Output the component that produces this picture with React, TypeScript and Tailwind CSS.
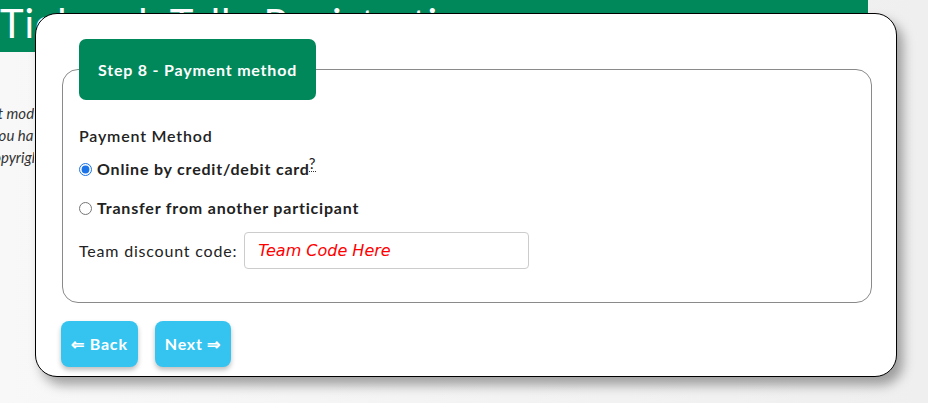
import * as React from 'react'

const font = { fontFamily: 'Lato, "Open Sans", sans-serif' }

function PageBehind() {
  return (
    <div className="min-h-[403px] bg-gradient-to-r from-[#f8f8f8] to-[#efefef]">
      <div className="h-[52px] w-[868px] bg-[#00885b] overflow-hidden">
        <h1 className="text-white text-[40px] leading-[52px] whitespace-nowrap -mt-[3px] tracking-[1px]">
          Tiebreak Tally Registration
        </h1>
      </div>
      <div className="overflow-hidden w-[34px] pt-[50px] text-[15px] italic text-[#333] leading-[22px]">
        <p className="-ml-[22px] whitespace-nowrap">Test mode</p>
        <p className="-ml-[20px] whitespace-nowrap">If you have</p>
        <p className="-ml-[16px] whitespace-nowrap">Copyright</p>
      </div>
    </div>
  )
}

export default function App() {
  const [method, setMethod] = React.useState('card')

  return (
    <div className="relative w-[928px] h-[403px] overflow-hidden" style={font}>
      <PageBehind />

      <div className="absolute left-[35px] top-[13px] w-[862px] h-[364px] bg-white border border-black rounded-[22px] shadow-[6px_8px_12px_rgba(0,0,0,0.35)] pl-[26px] pr-[24px] pt-[25px] tracking-[0.8px]">
        <fieldset className="border border-[#8a8a8a] rounded-[16px] px-4 pb-[33px]">
          <legend className="px-0">
            <div className="bg-[#00885b] text-white font-bold text-[16px] rounded-[7px] h-[61px] px-[19px] flex items-center">
              Step 8 - Payment method
            </div>
          </legend>

          <div className="pt-[24px] text-[#222] text-[16px]">
            <div className="font-semibold leading-[24px]">Payment Method</div>

            <label className="flex items-center gap-[5px] mt-[9px] h-[24px] font-bold">
              <input
                type="radio"
                name="method"
                checked={method === 'card'}
                onChange={() => setMethod('card')}
                className="w-[13px] h-[13px] m-0 accent-[#1a73e8]"
              />
              <span className="flex items-start">
                Online by credit/debit card
                <span className="font-normal text-[15px] leading-[15px] -mt-[1px] -ml-[1px] border-b border-dotted border-[#333]">?</span>
              </span>
            </label>

            <label className="flex items-center gap-[5px] mt-[15px] h-[24px] font-bold">
              <input
                type="radio"
                name="method"
                checked={method === 'transfer'}
                onChange={() => setMethod('transfer')}
                className="w-[13px] h-[13px] m-0 accent-[#777]"
              />
              <span>Transfer from another participant</span>
            </label>

            <div className="flex items-center gap-[7px] mt-[12px]">
              <span>Team discount code:</span>
              <input
                type="text"
                placeholder="Team Code Here"
                className="w-[285px] h-[37px] border border-[#ccc] rounded-[4px] px-[13px] text-[16px] tracking-normal italic placeholder:text-[#f00] outline-none"
                style={{ fontFamily: '"Comic Sans MS", "DejaVu Sans", sans-serif' }}
              />
            </div>
          </div>
        </fieldset>

        <div className="flex gap-[17px] mt-[18px] -ml-[1px]">
          <button className="h-[46px] w-[77px] rounded-[8px] bg-[#35c4f0] text-white font-bold text-[16px] shadow-[0_3px_5px_rgba(0,0,0,0.25)]">
            ⇐ Back
          </button>
          <button className="h-[46px] w-[76px] rounded-[8px] bg-[#35c4f0] text-white font-bold text-[16px] shadow-[0_3px_5px_rgba(0,0,0,0.25)]">
            Next ⇒
          </button>
        </div>
      </div>
    </div>
  )
}
